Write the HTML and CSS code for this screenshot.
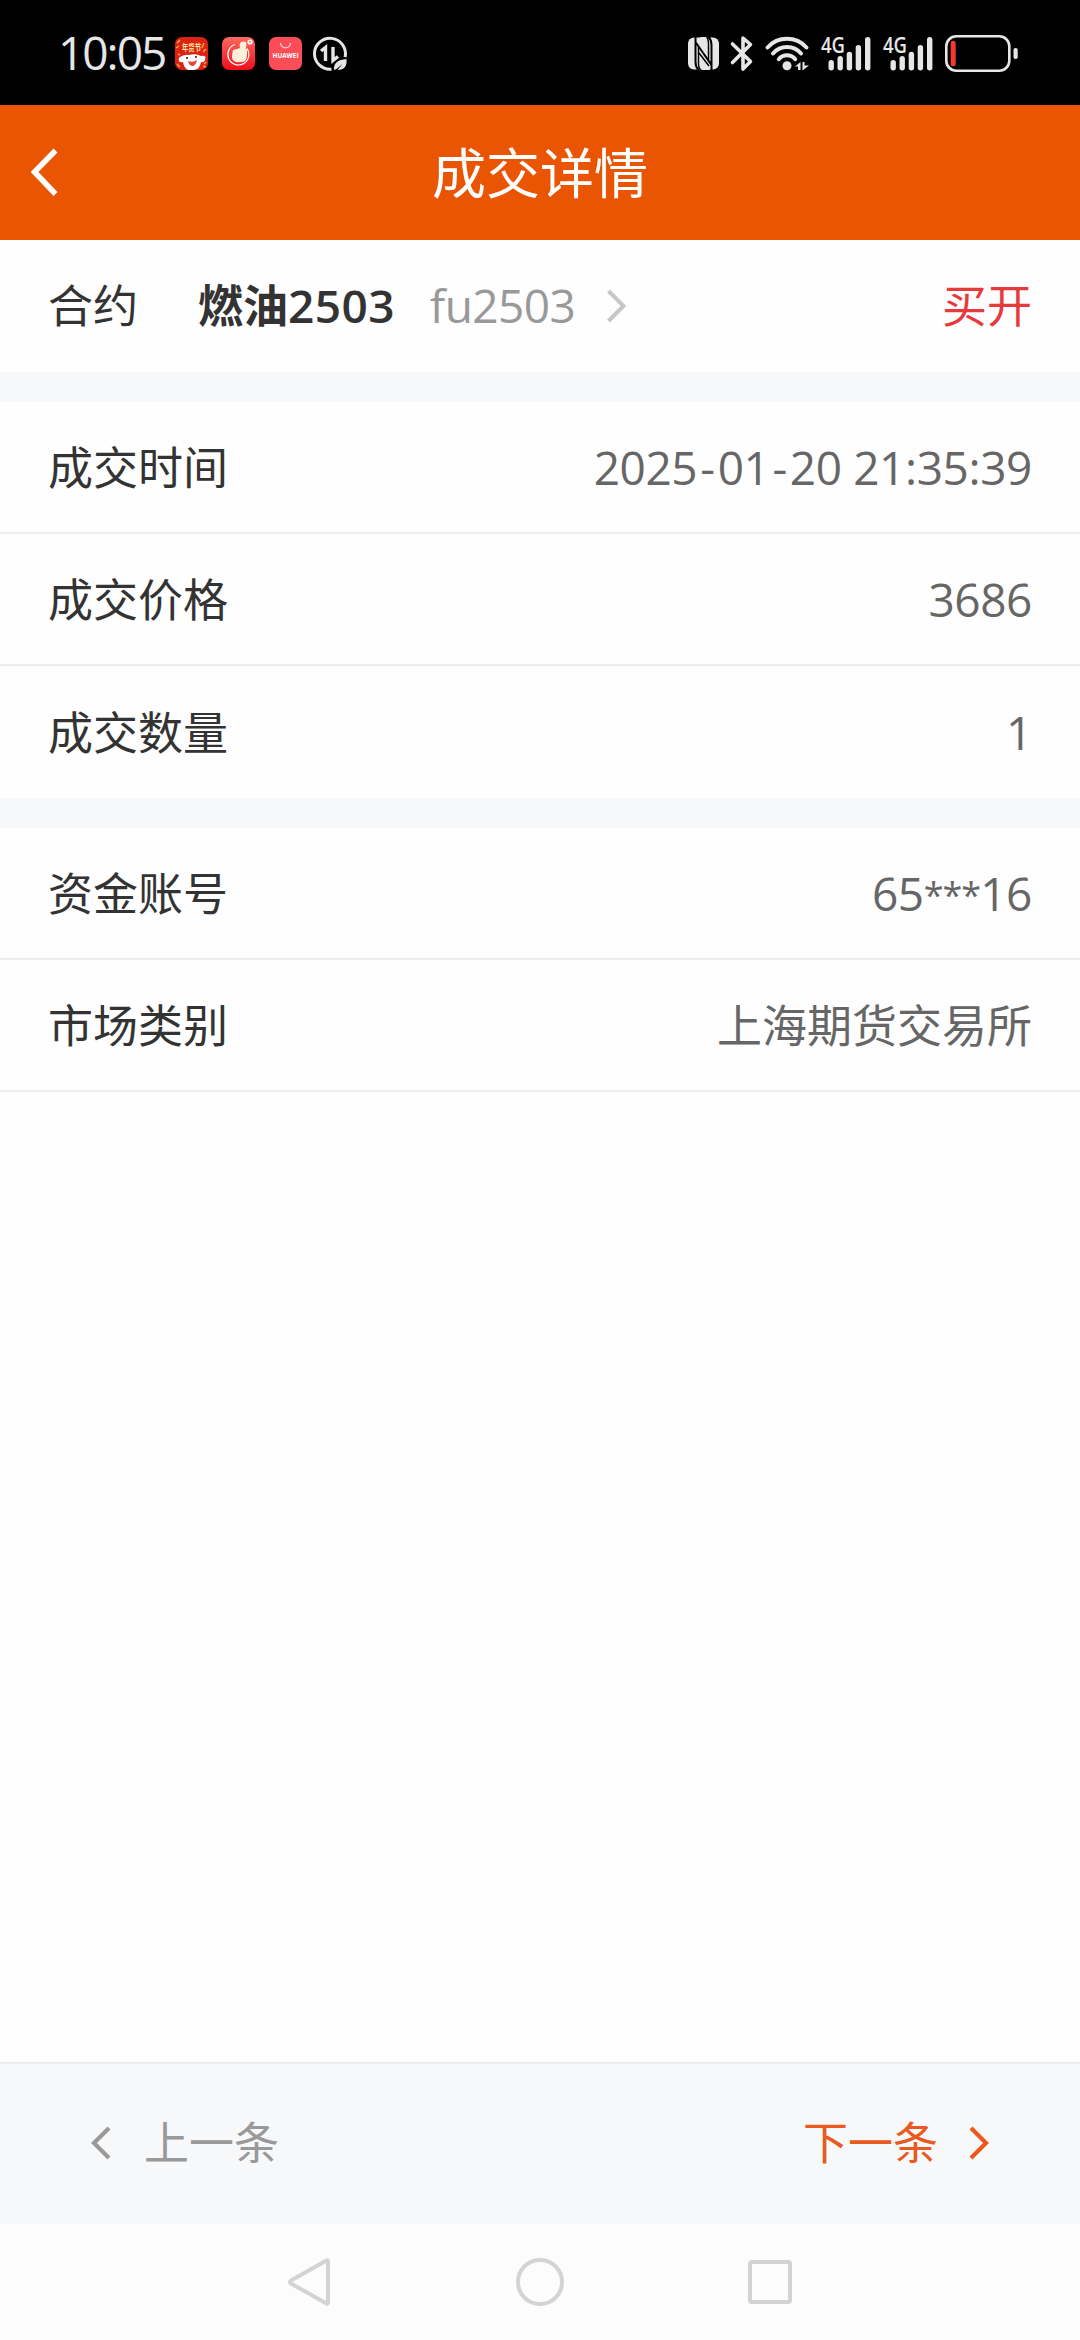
FILE: index.html
```html
<!DOCTYPE html>
<html lang="zh-CN">
<head>
  <meta charset="UTF-8" />
  <meta name="viewport" content="width=device-width, initial-scale=1.0"/>
  <title>成交详情</title>
  <link rel="stylesheet" href="styles.css">
</head>
<body>
  <div class="status">
    <span class="time">10:05</span>
    <div class="apps">
      <svg width="33" height="36" viewBox="0 0 33 36">
        <rect y="2" width="33" height="33" rx="7" fill="#dc2213"/>
        <path d="M2 8l3-3M1 13l3-2M29 8l-2 5M31 14l-3 3M2 29l3 3M29 29l2-2M3 19l2 1M28 31l3 1" stroke="#f5a04a" stroke-width="1.5"/>
        <text class="jd" x="7" y="16" textLength="19" lengthAdjust="spacingAndGlyphs">年货节</text>
        <path d="M5 22q5-3 9-2q7-2 12 1q6-1 4 4q-1 3-4 2q-1 7-7 8h-6q-4-2-5-8q-3 1-4-1q-1-3 1-4z" fill="#fff"/>
        <path d="M13 26q5 2 9-1q-1 5-4 6q-4 0-5-5z" fill="#e8453f"/>
        <path d="M11 23h2M20 22h2" stroke="#222" stroke-width="1.6"/>
      </svg>
      <svg width="33" height="36" viewBox="0 0 33 36">
        <defs>
          <linearGradient id="red" x1="0" y1="0" x2="0" y2="1">
            <stop offset="0" stop-color="#fb6a5e"/>
            <stop offset="1" stop-color="#f00d1b"/>
          </linearGradient>
        </defs>
        <rect y="2" width="33" height="33" rx="7" fill="url(#red)"/>
        <path d="M13 9.500a10.500 10.500 0 1 0 12 4" fill="none" stroke="#fff" stroke-width="1.2"/>
        <path d="M11 15q4-1 7-2q-1-4 1-6q3-1 5 0q1 3 0 6q2 2 1 5q0 6-2 8q-4 2-9 1q-4-1-4-5q0-4 1-7z" fill="#fff0dc"/>
        <circle cx="28" cy="7" r="2.6" fill="#fff"/>
        <circle cx="28" cy="7" r="1" fill="#f77"/>
      </svg>
      <svg width="33" height="36" viewBox="0 0 33 36">
        <rect y="2" width="33" height="33" rx="7" fill="#fb4d58"/>
        <path d="M11.500 8a5 4.800 0 0 0 10 0" fill="none" stroke="#ffd5d5" stroke-width="1.200"/>
        <text class="hw" x="3.500" y="23" textLength="26" lengthAdjust="spacingAndGlyphs">HUAWEI</text>
      </svg>
      <svg width="34" height="36" viewBox="0 0 34 36">
        <path d="M18.500 34.200a15.500 15.500 0 1 1 13.600-12" fill="none" stroke="#e6e6e6" stroke-width="3"/>
        <path d="M8 16l4.500-3.500V26M20 12v13.500l5-4" fill="none" stroke="#e6e6e6" stroke-width="3.400"/>
        <path d="M21 35q-1-10 12.500-11q1 11-9 11l5-6l-6 5z" fill="#e6e6e6"/>
      </svg>
    </div>
    <div class="system">
      <svg width="31" height="36" viewBox="0 0 31 36">
        <rect y="2.500" width="31" height="32" rx="6" fill="#e6e6e6"/>
        <path d="M7.500 2v25q0 5 3 8M23.500 35V10q0-5-3-8M7.500 7L23.500 30" fill="none" stroke="#000" stroke-width="2"/>
        <path d="M11 19v10q0 3 3 6h8zM12 2h7l1 10v6z" fill="#e6e6e6"/>
        <path d="M10.500 12v17q0 4 2 6M20.500 25V9q0-5-2-7M11 18l10 13" fill="none" stroke="#000" stroke-width="1.500"/>
      </svg>
      <svg width="21" height="36" viewBox="0 0 21 36">
        <path d="M1.500 9L19.500 26.500L12 34V3L19.500 9.500L1.500 27.500" fill="none" stroke="#e6e6e6" stroke-width="3.600" stroke-linecap="round" stroke-linejoin="round"/>
      </svg>
      <svg width="45" height="36" viewBox="0 0 45 36">
        <g fill="none" stroke="#e6e6e6" stroke-width="4" stroke-linecap="round">
          <path d="M3.500 12.500A26.200 26.200 0 0 1 42.500 12.500"/>
          <path d="M9 18.500A18.500 18.500 0 0 1 37 18.500"/>
          <path d="M14.800 24.200A10.700 10.700 0 0 1 31.200 24.200"/>
        </g>
        <circle cx="23" cy="30.700" r="4.500" fill="#e6e6e6"/>
        <path d="M31 31.500l5.500-4.500v8h-2.500v-3.500zM38.500 27h2v3.500h4.500l-6.500 5z" fill="#e6e6e6"/>
      </svg>
      <svg width="50" height="36" viewBox="0 0 50 36">
        <text class="net" x="0" y="18" textLength="24" lengthAdjust="spacingAndGlyphs">4G</text>
        <path d="M10.200 27.700v5M19.200 23.700v9M28.400 19.400v13.300M37.400 12.700v20M46.700 4.700v28" stroke="#e6e6e6" stroke-width="5.400" stroke-linecap="round"/>
      </svg>
      <svg width="50" height="36" viewBox="0 0 50 36">
        <text class="net" x="0" y="18" textLength="24" lengthAdjust="spacingAndGlyphs">4G</text>
        <path d="M10.200 27.700v5M19.200 23.700v9M28.400 19.400v13.300M37.400 12.700v20M46.700 4.700v28" stroke="#e6e6e6" stroke-width="5.400" stroke-linecap="round"/>
      </svg>
      <svg width="73" height="37" viewBox="0 0 73 37">
        <rect x="1.300" y="1.300" width="63" height="34.400" rx="10" fill="none" stroke="#e6e6e6" stroke-width="2.600"/>
        <rect x="5.700" y="5.700" width="5" height="25.600" rx="2.500" fill="#f23a2b"/>
        <rect x="68.500" y="13" width="4.200" height="11" rx="2" fill="#e6e6e6"/>
      </svg>
    </div>
  </div>

  <div class="header">
    <svg width="28" height="50" viewBox="0 0 28 50">
      <path d="M25.500 2.500L4.500 24L25.500 46" fill="none" stroke="#fff" stroke-width="5.500"/>
    </svg>
    <h1>成交详情</h1>
  </div>

  <div class="group">
    <div class="row contract">
      <span class="label">合约</span>
      <span class="name">燃油<b>2503</b></span>
      <span class="code">fu2503</span>
      <svg width="22" height="36" viewBox="0 0 22 36">
        <path d="M2.500 3L17.500 18L2.500 33" fill="none" stroke="#c7c7c7" stroke-width="4"/>
      </svg>
      <span class="buy">买开</span>
    </div>
  </div>

  <div class="group">
    <div class="row">
      <span class="label">成交时间</span>
      <span class="value">2025<i>-</i>01<i>-</i>20 21:35:39</span>
    </div>
    <div class="row">
      <span class="label">成交价格</span>
      <span class="value">3686</span>
    </div>
    <div class="row last">
      <span class="label">成交数量</span>
      <span class="value">1</span>
    </div>
  </div>

  <div class="group end">
    <div class="row">
      <span class="label">资金账号</span>
      <span class="value">65<span class="mask">***</span>16</span>
    </div>
    <div class="row">
      <span class="label">市场类别</span>
      <span class="value zh">上海期货交易所</span>
    </div>
  </div>

  <div class="pager">
    <div class="prev">
      <svg width="20" height="36" viewBox="0 0 20 36">
        <path d="M18 3L3 18L18 33" fill="none" stroke="#999" stroke-width="4.200"/>
      </svg>
      <span>上一条</span>
    </div>
    <div class="next">
      <span>下一条</span>
      <svg width="20" height="36" viewBox="0 0 20 36">
        <path d="M2 3L17 18L2 33" fill="none" stroke="#ee571b" stroke-width="4.200"/>
      </svg>
    </div>
  </div>

  <div class="nav">
    <svg width="44" height="48" viewBox="0 0 44 48">
      <path d="M38.500 2.500Q40 1.500 40 4V44Q40 46.500 38.500 45.500L3 25.500Q1 24 3 22.500Z" fill="none" stroke="#d3d3d3" stroke-width="4" stroke-linejoin="round"/>
    </svg>
    <svg width="48" height="48" viewBox="0 0 48 48">
      <circle cx="24" cy="24" r="22" fill="none" stroke="#d3d3d3" stroke-width="4"/>
    </svg>
    <svg width="44" height="44" viewBox="0 0 44 44">
      <rect x="2" y="2" width="40" height="40" rx="2" fill="none" stroke="#d3d3d3" stroke-width="4"/>
    </svg>
  </div>
</body>
</html>
```
FILE: styles.css
```css
* {
  box-sizing: border-box;
}
body {
  margin: 0;
  height: 2340px;
  display: flex;
  flex-direction: column;
  background: #fefefe;
  color: #333;
  font-family: "Open Sans", "Noto Sans CJK SC", sans-serif;
  font-size: 45px;
  line-height: 1.2;
}
svg {
  display: block;
  flex: none;
  overflow: visible;
}

/* phone status bar */
.status {
  height: 105px;
  background: #000;
  color: #e6e6e6;
  display: flex;
  align-items: center;
  padding: 1px 62px 0 58px;
}
.time {
  width: 117px;
  font-size: 46px;
  font-weight: 500;
  letter-spacing: -2px;
}
.apps {
  display: flex;
  gap: 14px;
}
.apps svg:last-child {
  margin-left: -3px;
}
.system {
  display: flex;
  align-items: center;
  gap: 12px;
  margin-left: auto;
}
.net {
  font-size: 22px;
  font-weight: 600;
  fill: #e6e6e6;
}
.jd {
  font-size: 9px;
  font-weight: 700;
  fill: #ffe3a0;
}
.hw {
  font-size: 6.5px;
  font-weight: 700;
  fill: #fff;
}

.header {
  height: 135px;
  background: #ea5504;
  color: #fff;
  display: flex;
  align-items: center;
  padding: 0 58px 0 30px;
}
.header h1 {
  flex: 1;
  margin: 0;
  padding-top: 2px;
  text-align: center;
  font-size: 54px;
  font-weight: 400;
}

.group {
  border-bottom: 30px solid #f7f8fa;
}
.group.end {
  border-bottom: none;
}
.row {
  height: 132px;
  display: flex;
  align-items: center;
  justify-content: space-between;
  padding: 2px 48px 0;
  border-bottom: 2px solid #eee;
}
.row.last,
.row.contract {
  border-bottom: none;
}
.contract {
  justify-content: flex-start;
  padding-top: 0;
}
.name {
  margin-left: 60px;
  font-weight: 700;
}
.name b {
  font-size: 46px;
  font-weight: 650;
  letter-spacing: 0.4px;
}
.code {
  margin-left: 35px;
  margin-right: 31px;
  font-size: 46px;
  letter-spacing: -0.6px;
  color: #999;
}
.buy {
  margin-left: auto;
  color: #e83a3c;
}
.value {
  color: #666;
  font-size: 46px;
  letter-spacing: -0.4px;
}
.value i {
  font-style: normal;
  padding: 0 3px;
}
.value.zh {
  font-size: 45px;
  letter-spacing: 0;
}
.mask {
  font-size: 36px;
  line-height: 0;
  letter-spacing: -1px;
  vertical-align: 3px;
}

/* previous / next record */
.pager {
  margin-top: auto;
  height: 162px;
  background: #f7f8fa;
  border-top: 2px solid #eee;
  display: flex;
  align-items: center;
  justify-content: space-between;
  padding: 0 91px 3px;
}
.prev,
.next {
  display: flex;
  align-items: center;
}
.prev {
  gap: 33px;
  color: #999;
}
.next {
  gap: 31px;
  color: #e85a20;
}

.nav {
  height: 116px;
  background: #fcfcfc;
  display: flex;
  align-items: center;
  justify-content: center;
  gap: 184px;
}
```
